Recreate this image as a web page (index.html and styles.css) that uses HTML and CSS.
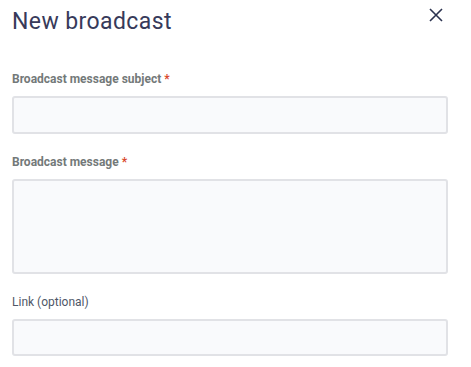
FILE: index.html
```html
<!DOCTYPE html>
<html lang="en">
<head>
    <meta charset="UTF-8">
    <title>New broadcast</title>
    <link rel="stylesheet" href="styles.css">
</head>
<body>
    <div class="modal">
        <div class="modal-header">
            <h1 class="title">New broadcast</h1>
            <button class="close" type="button" aria-label="Close">
                <svg width="14" height="14" viewBox="0 0 14 14">
                    <path d="M1 1L13 13M13 1L1 13" stroke="#2b3350" stroke-width="1.6" fill="none"/>
                </svg>
            </button>
        </div>

        <div class="field">
            <label class="label">Broadcast message subject <span class="req">*</span></label>
            <input class="input" type="text">
        </div>

        <div class="field">
            <label class="label">Broadcast message <span class="req">*</span></label>
            <textarea class="input textarea"></textarea>
        </div>

        <div class="field field-link">
            <label class="label light">Link (optional)</label>
            <input class="input input-link" type="text">
        </div>
    </div>
</body>
</html>
```

FILE: styles.css
```css
body {
    margin: 0;
    background: #fff;
    font-family: 'Roboto', 'Noto Sans', sans-serif;
}

.modal {
    width: 436px;
    padding: 0 12px;
}

.modal-header {
    display: flex;
    justify-content: space-between;
    align-items: flex-start;
    height: 71px;
}

.title {
    margin: 8px 0 0;
    font-size: 23px;
    font-weight: 400;
    color: #373a5a;
    line-height: 28px;
    letter-spacing: 0.4px;
}

.close {
    border: none;
    background: none;
    padding: 0;
    margin: 8px 5px 0 0;
    width: 14px;
    height: 14px;
}

.field {
    display: flex;
    flex-direction: column;
    margin-bottom: 20px;
}

.field-link {
    margin-top: 3px;
}

.label {
    font-size: 12px;
    font-weight: 700;
    color: #737979;
    line-height: 16px;
    margin-bottom: 9px;
}

.label.light {
    font-weight: 400;
    color: #4f5768;
}

.req {
    color: #d9482b;
}

.input {
    box-sizing: border-box;
    height: 38px;
    border: 2px solid #e1e2e6;
    border-radius: 3px;
    background: #f9fafc;
    font-family: inherit;
    margin: 0;
}

.input-link {
    height: 37px;
}

.textarea {
    height: 95px;
    resize: none;
}
```
